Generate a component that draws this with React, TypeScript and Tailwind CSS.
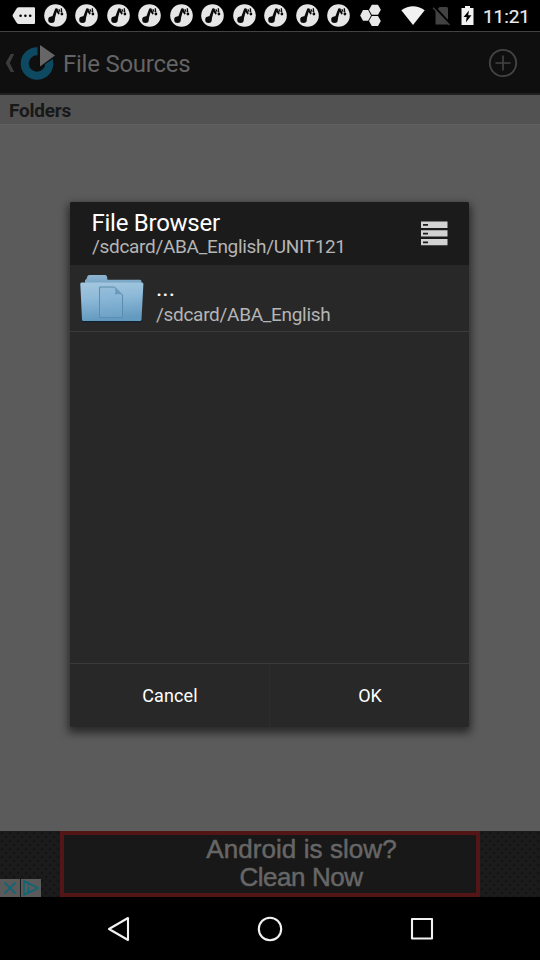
import React from "react";

function NoteIcon() {
  return (
    <svg className="block h-[23px] w-[23px] shrink-0" viewBox="0 0 23 23">
      <circle cx="11.5" cy="11.5" r="11.3" fill="#e6e6e6" />
      <circle cx="7.500" cy="15.800" r="3.300" fill="#0a0a0a" />
      <path d="M5.600 13.600 8.400 12.200 11.300 4.600 13.200 4.200 15.800 9.200 14.600 10.800 12.600 8 10.600 15.500z" fill="#0a0a0a" />
      <path d="M14.800 5.200l1.400 2.600M17.300 4.200l.4 4" stroke="#0a0a0a" strokeWidth="1.300" fill="none" />
      <circle cx="17.900" cy="10" r="1.400" fill="#0a0a0a" />
    </svg>
  );
}

function StatusBar() {
  return (
    <div className="flex h-[31px] shrink-0 items-start bg-black">
      <svg className="ml-[12px] mt-[7px] block h-[18px] w-[24px] shrink-0" viewBox="0 0 24 18">
        <path d="M7 0.3H22a1 1 0 0 1 1 1V16a1 1 0 0 1-1 1H7Q5.5 17 4.6 15.7L.8 9.6Q.3 8.6.8 7.7L4.6 1.6Q5.5.3 7 .3Z" fill="#e8e8e8" />
        <circle cx="8.600" cy="8.700" r="1.300" /><circle cx="13.400" cy="8.700" r="1.300" /><circle cx="18.200" cy="8.700" r="1.300" />
      </svg>
      <div className="ml-[7.5px] mt-[4px] flex gap-[8.5px]">
        {Array.from({ length: 10 }, (_, i) => <NoteIcon key={i} />)}
      </div>
      <svg className="ml-[9.5px] mt-[4px] block h-[23px] w-[22px] shrink-0" viewBox="0 0 22 23" fill="#e8e8e8">
        <path d="M3 6h5.200l2.800 5.400-2.800 5.400H3L.2 11.400z" />
        <path d="M11.800 .8h6.200l2.800 5-2.800 5h-6.200L9 5.800z" />
        <path d="M11.800 12h6.200l2.800 5-2.800 5h-6.200L9 17z" />
      </svg>
      <svg className="ml-[19px] mt-[6px] block h-[20px] w-[24px] shrink-0" viewBox="0 0 24 20">
        <path d="M.3 4.200Q12-3.700 23.700 4.200L12 19z" fill="#f2f2f2" />
      </svg>
      <svg className="ml-[7px] mt-[6px] block h-[20px] w-[19px] shrink-0" viewBox="0 0 19 20">
        <path d="M7.500 1H14.500q1.500 0 1.500 1.500v16H3.500v-13z" fill="#424242" />
        <path d="M2.300.8 19 18.500" stroke="#000" strokeWidth="2.200" />
        <path d="M1 1.800 17.500 19" stroke="#424242" strokeWidth="1.300" />
      </svg>
      <svg className="ml-[10px] mt-[6px] block h-[20px] w-[13px] shrink-0" viewBox="0 0 13 20">
        <path d="M4 0h5v2h3.500v17H.500V2H4z" fill="#f2f2f2" />
        <path d="M8 4.500 2.500 11h3.200L4.800 16.500 10.500 9.200H7.200z" fill="#000" />
      </svg>
      <span className="ml-[9.5px] mt-[4px] text-[19px] leading-[25px] tracking-[-0.1px] text-[#ececec] [-webkit-text-stroke:0.2px_#ececec]">11:21</span>
    </div>
  );
}

function ActionBar() {
  return (
    <header className="flex h-[64px] shrink-0 items-center border-b-2 border-t border-b-[#202020] border-t-[#424242] bg-[#0f0f0f]">
      <svg className="ml-[5px] block h-[20px] w-[10px]" viewBox="0 0 10 20">
        <path d="M5.700 1H9.200L4.700 10l4.500 9H5.700L.700 10z" fill="#3c3c3c" />
      </svg>
      <svg className="ml-[5px] block h-[38px] w-[36px]" viewBox="0 0 36 38">
        <circle cx="17" cy="19.500" r="12.300" fill="none" stroke="#0d4a62" strokeWidth="8" />
        <path d="M17.500 0 39 11 17.500 25z" fill="#0f0f0f" />
        <path d="M20 1 35 11.500 20 22.500z" fill="#666" />
      </svg>
      <h1 className="ml-[7px] mt-[2px] text-[24px] leading-[30px] tracking-[-0.24px] text-[#646464]">File Sources</h1>
      <svg className="ml-auto mr-[22px] mt-px block h-[30px] w-[30px]" viewBox="0 0 30 30" fill="none" stroke="#454545">
        <circle cx="15" cy="15" r="13.200" strokeWidth="1.800" />
        <path d="M15 7.500v15M7.500 15h15" strokeWidth="1.600" />
      </svg>
    </header>
  );
}

function FolderIcon() {
  return (
    <svg className="block h-[50px] w-[64px] shrink-0" viewBox="0 0 64 50">
      <defs>
        <linearGradient id="folder-front" x2="0.150" y2="1">
          <stop stopColor="#a5c8df" /><stop offset=".45" stopColor="#8db9d8" /><stop offset="1" stopColor="#639abf" />
        </linearGradient>
        <linearGradient id="folder-back" x2="0" y2="1">
          <stop stopColor="#8fb6d1" /><stop offset="1" stopColor="#6c9cbf" />
        </linearGradient>
      </defs>
      <path d="M2 46h60v2.200H2z" fill="#13222e" />
      <path d="M5 11V6Q7 5.500 7.300 2.500 7.600 1 9.500 1h15.500q1.800 0 2 1.800l.5 3H60q1.500 0 1.500 2V13H5z" fill="url(#folder-back)" />
      <path d="M1.500 8.500h60.500q1.500 0 1.400 1.500L61.500 45.500q0 1.500-1.500 1.500H3.500q-1.500 0-1.500-1.500L.300 10Q.300 8.500 1.500 8.500z" fill="url(#folder-front)" />
      <path d="M19.500 13H34.500l8 8V43.500H19.500z" fill="#7fb0d2" fillOpacity=".25" stroke="#5c8cae" strokeWidth="1" />
      <path d="M34.500 13q2 5 0 7.500 4-1 8 .5z" fill="#6a9abb" />
    </svg>
  );
}

function FileDialog() {
  return (
    <section className="flex h-[525px] w-[399px] flex-col overflow-hidden rounded-[2px] bg-[#282828] shadow-[0_4px_9px_2px_rgba(0,0,0,0.55)]">
      <div className="flex h-[63px] shrink-0 bg-[#1b1b1b] pl-[21.5px]">
        <div className="pt-[7px]">
          <h2 className="text-[24px] leading-[28px] tracking-[-0.26px] text-white">File Browser</h2>
          <p className="ml-[0.5px] text-[19px] leading-[20px] tracking-[-0.31px] text-[#b5b5b5]">/sdcard/ABA_English/UNIT121</p>
        </div>
        <svg className="ml-auto mr-[21px] mt-[19px] block h-[26px] w-[28px]" viewBox="0 0 28 26">
          <path d="M1 .500h26.500V7H1zM1 9.300h26.500v6.200H1zM1 18h26.500v6.200H1z" fill="#d2d2d2" />
          <path d="M3 3h5v1.800h-5zM3 11.800h5v1.800h-5zM3 20.500h5v1.800h-5z" fill="#1b1b1b" />
        </svg>
      </div>
      <div className="flex h-[67px] shrink-0 border-b border-[#3b3b3b] pl-[10px] pt-[9px]">
        <FolderIcon />
        <div className="ml-[12px]">
          <p className="text-[24px] leading-[28px] text-white">...</p>
          <p className="mt-px text-[19px] leading-[24px] tracking-[-0.3px] text-[#b5b5b5]">/sdcard/ABA_English</p>
        </div>
      </div>
      <div className="flex-1" />
      <div className="flex h-[64px] shrink-0 border-t border-[#3b3b3b] text-[18px] text-white">
        <button className="flex-1 border-r border-[#2d2d2d] pl-px tracking-[0.1px]">Cancel</button>
        <button className="flex-1 pl-px">OK</button>
      </div>
    </section>
  );
}

function MeshPattern() {
  return (
    <svg className="block h-[66px] w-[60px]" viewBox="0 0 60 66">
      <defs>
        <pattern id="mesh" width="8" height="8" patternUnits="userSpaceOnUse">
          <rect width="8" height="8" fill="#1b1b1b" />
          <path d="M2 .500 3.500 2 2 3.500.500 2zM6 4.500 7.500 6 6 7.500 4.500 6z" fill="#121212" />
        </pattern>
      </defs>
      <rect width="60" height="66" fill="url(#mesh)" />
    </svg>
  );
}

function AdBanner() {
  return (
    <div className="relative flex h-[66px] shrink-0">
      <MeshPattern />
      <div className="flex w-[420px] flex-col items-center border-4 border-[#531515] bg-[#181818] pl-[62px] font-['Liberation_Sans',Arial,sans-serif] text-[26px] leading-[28px] text-[#666] [-webkit-text-stroke:0.5px_#666]">
        <p className="pl-px tracking-[0.07px]">Android is slow?</p>
        <p className="tracking-[-0.45px]">Clean Now</p>
      </div>
      <MeshPattern />
      <div className="absolute bottom-0 left-0 flex gap-px bg-[#181818]">
        <svg className="block h-[18px] w-[20px] bg-[#5a5a5a]" viewBox="0 0 20 18">
          <path d="m4.500 3.500 11 11m0-11-11 11" stroke="#0a6676" strokeWidth="1.700" />
        </svg>
        <svg className="block h-[18px] w-[20px] bg-[#5a5a5a]" viewBox="0 0 20 18" fill="none" stroke="#0a6676">
          <path d="M3 2 17 9 3 16z" strokeWidth="1.600" strokeLinejoin="round" />
          <path d="M7.500 8v5M7.500 5.500v1.300" strokeWidth="1.500" />
        </svg>
      </div>
    </div>
  );
}

function NavigationBar() {
  return (
    <nav className="flex h-[63px] shrink-0 items-center bg-black pl-[104px]">
      <svg className="block h-[32px] w-[332px]" viewBox="0 0 332 32" fill="none" stroke="#f2f2f2" strokeWidth="2.100" strokeLinejoin="round">
        <path d="M24 5v22L5 16z" />
        <circle cx="166" cy="16" r="11.200" />
        <rect x="308" y="6" width="20" height="19.500" />
      </svg>
    </nav>
  );
}

export default function App() {
  return (
    <div className="flex h-[960px] w-[540px] flex-col overflow-hidden bg-black font-[Roboto,sans-serif]">
      <StatusBar />
      <ActionBar />
      <main className="flex h-[736px] shrink-0 flex-col bg-[#5b5b5b]">
        <h2 className="h-[30px] shrink-0 border-b border-[#606060] bg-[#525252] pl-[9px] text-[19px] font-bold leading-[31px] tracking-[-0.22px] text-[#181818]">Folders</h2>
        <div className="ml-[70px] mt-[77px]">
          <FileDialog />
        </div>
      </main>
      <AdBanner />
      <NavigationBar />
    </div>
  );
}
